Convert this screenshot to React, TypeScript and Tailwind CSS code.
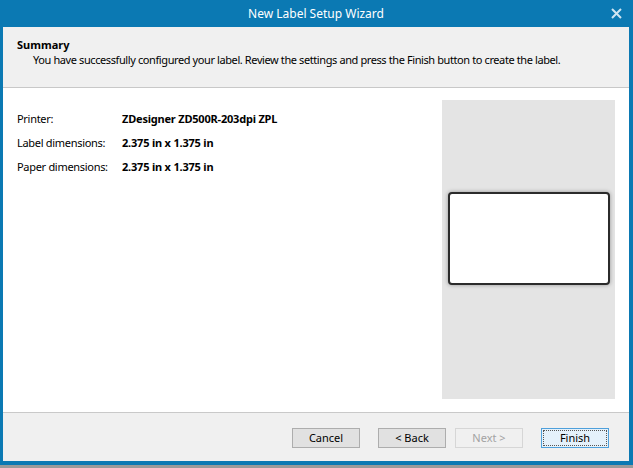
export default function App() {
  const rows = [
    { label: "Printer:", value: "ZDesigner ZD500R-203dpi ZPL" },
    { label: "Label dimensions:", value: "2.375 in x 1.375 in" },
    { label: "Paper dimensions:", value: "2.375 in x 1.375 in" },
  ];

  return (
    <div
      className="w-[633px] h-[468px] bg-[#9a9a9a] overflow-hidden"
      style={{ fontFamily: '"Noto Sans", "Open Sans", sans-serif' }}
    >
      <div className="h-[465px] bg-[#0b79b3] pl-[3px] pr-[4px] pb-[4px] flex flex-col">
        {/* Title bar */}
        <div className="h-[27px] flex items-center relative shrink-0">
          <span className="w-full text-center text-white text-[12px]">New Label Setup Wizard</span>
          <svg
            className="absolute right-[7px] top-[8px] w-[11px] h-[11px]"
            viewBox="0 0 11 11"
            fill="none"
            stroke="#cfe5f2"
            strokeWidth="2"
          >
            <path d="M1 1l9 9M10 1l-9 9" />
          </svg>
        </div>

        <div className="flex-1 flex flex-col bg-white">
          {/* Header */}
          <div className="h-[61px] bg-[#f0f0f0] border-b border-[#c8c8c8] pl-[14px] pt-[10px] text-[11px] leading-[15px] text-black shrink-0">
            <div className="font-bold">Summary</div>
            <div className="pl-[16px] tracking-[-0.4px]">
              You have successfully configured your label. Review the settings and press the Finish button to create the label.
            </div>
          </div>

          {/* Content */}
          <div className="flex-1 flex pt-[12px] pr-[14px] pb-[13px] pl-[14px]">
            <div className="flex-1 flex flex-col pt-[11px] gap-[9px] text-[11px] leading-[15px] text-black">
              {rows.map((r) => (
                <div key={r.label} className="flex">
                  <span className="w-[105px] tracking-[-0.3px]">{r.label}</span>
                  <span className="font-bold tracking-[-0.2px]">{r.value}</span>
                </div>
              ))}
            </div>
            <div className="w-[173px] bg-[#e4e4e4] flex flex-col pl-[6px] pr-[5px] pt-[92px]">
              <div className="h-[93px] bg-white border-2 border-[#2b2b2b] rounded-[4px] shadow-[0_0_4px_rgba(0,0,0,0.35)]" />
            </div>
          </div>

          {/* Footer */}
          <div className="h-[49px] bg-[#f0f0f0] border-t border-[#c9c9c9] flex items-start justify-end pt-[15px] pr-[20px] shrink-0 text-[11px]">
            <button className="w-[68px] h-[20px] bg-[#e1e1e1] border border-[#adadad] text-black">Cancel</button>
            <button className="ml-[18px] w-[68px] h-[20px] bg-[#e1e1e1] border border-[#adadad] text-black">&lt; Back</button>
            <button className="ml-[9px] w-[68px] h-[20px] bg-[#f0f0f0] border border-[#d6d6d6] text-[#a3a3a3]">Next &gt;</button>
            <button className="ml-[18px] w-[68px] h-[20px] bg-[#e5f1fb] border border-[#4fa0db] p-[1px] text-black">
              <span className="flex w-full h-full items-center justify-center border border-dotted border-[#555]">Finish</span>
            </button>
          </div>
        </div>
      </div>
    </div>
  );
}
